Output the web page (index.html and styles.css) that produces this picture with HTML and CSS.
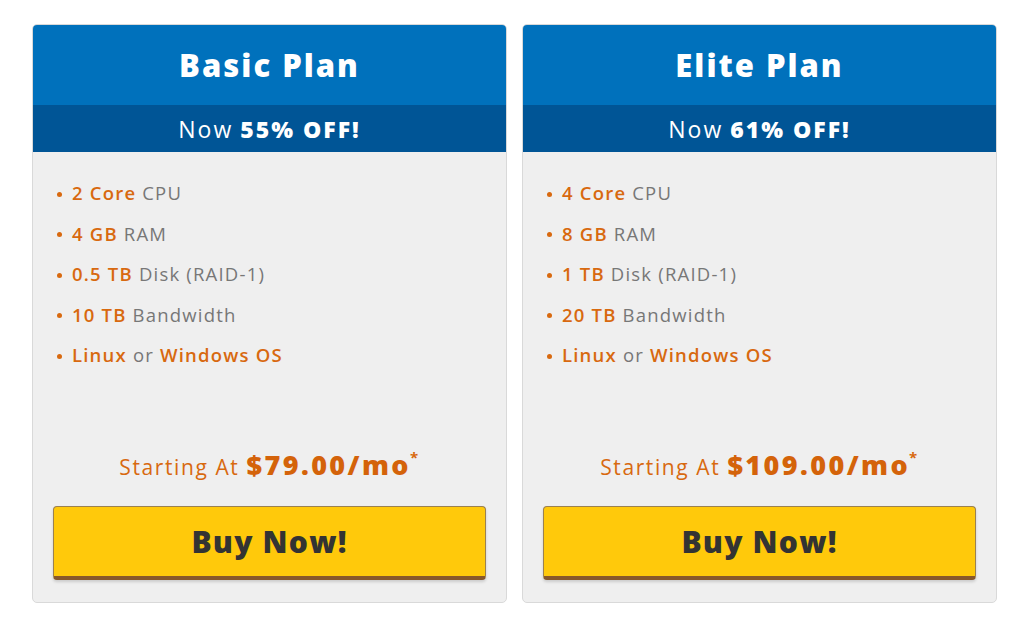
FILE: index.html
```html
<!DOCTYPE html>
<html>
<head>
<meta charset="utf-8">
<link rel="stylesheet" href="styles.css">
</head>
<body>
<div class="plans">
  <div class="card">
    <div class="card-title">Basic Plan</div>
    <div class="card-deal">Now <b>55% OFF!</b></div>
    <div class="card-body">
      <ul class="features">
        <li><b>2 Core</b> CPU</li>
        <li><b>4 GB</b> RAM</li>
        <li><b>0.5 TB</b> Disk (RAID-1)</li>
        <li><b>10 TB</b> Bandwidth</li>
        <li><b>Linux</b> or <b>Windows OS</b></li>
      </ul>
      <div class="price">Starting At <b>$79.00/mo</b><sup>*</sup></div>
      <a class="buy" href="#">Buy Now!</a>
    </div>
  </div>
  <div class="card">
    <div class="card-title">Elite Plan</div>
    <div class="card-deal">Now <b>61% OFF!</b></div>
    <div class="card-body">
      <ul class="features">
        <li><b>4 Core</b> CPU</li>
        <li><b>8 GB</b> RAM</li>
        <li><b>1 TB</b> Disk (RAID-1)</li>
        <li><b>20 TB</b> Bandwidth</li>
        <li><b>Linux</b> or <b>Windows OS</b></li>
      </ul>
      <div class="price">Starting At <b>$109.00/mo</b><sup>*</sup></div>
      <a class="buy" href="#">Buy Now!</a>
    </div>
  </div>
</div>
</body>
</html>
```
FILE: styles.css
```css
* { box-sizing: border-box; }
body {
  margin: 0;
  background: #fff;
  font-family: "Open Sans", "Liberation Sans", sans-serif;
}
.plans {
  display: flex;
  gap: 15px;
  padding: 24px 0 0 32px;
}
.card {
  width: 475px;
  background: #efefef;
  border: 1px solid #d9d9d9;
  border-radius: 5px;
  overflow: hidden;
}
.card-title {
  height: 81px;
  margin: -1px -1px 0;
  background: #0071bc;
  color: #fff;
  font-weight: 800;
  font-size: 31px;
  letter-spacing: 2px;
  display: flex;
  align-items: center;
  justify-content: center;
  padding-top: 1px;
}
.card-deal {
  height: 47px;
  margin: 0 -1px;
  background: #005596;
  color: #fff;
  font-size: 23px;
  letter-spacing: 2px;
  display: flex;
  align-items: center;
  justify-content: center;
}
.card-deal b { font-weight: 800; margin-left: 7px; }
.card-body {
  padding: 21px 20px 22px;
}
.features {
  list-style: none;
  margin: 0 0 71px;
  padding: 0 0 0 5px;
}
.features li {
  height: 40.6px;
  line-height: 40.6px;
  font-size: 18.5px;
  letter-spacing: 1.2px;
  color: #777;
}
.features li::before {
  content: "";
  display: inline-block;
  width: 5px;
  height: 5px;
  border-radius: 50%;
  background: #d8690f;
  vertical-align: middle;
  margin: -2px 10px 0 -1px;
}
.features b { color: #d8690f; font-weight: 600; }
.price {
  height: 36px;
  line-height: 36px;
  text-align: center;
  color: #d8690f;
  font-size: 21px;
  letter-spacing: 1.6px;
  margin-bottom: 23px;
}
.price b { font-size: 27px; font-weight: 800; letter-spacing: 2.4px; color: #d4630a; }
.price sup { font-size: 15px; font-weight: 700; vertical-align: 12px; line-height: 0; margin-left: -1px; }
.buy {
  display: flex;
  align-items: center;
  justify-content: center;
  height: 74px;
  background: #ffc90b;
  border: 1px solid #9b8150;
  border-bottom: 4px solid #87572a;
  border-radius: 4px;
  box-shadow: 0 2px 3px rgba(0,0,0,0.15);
  color: #333;
  font-weight: 800;
  font-size: 30px;
  letter-spacing: 1.2px;
  text-decoration: none;
  padding-top: 1px;
}
```
